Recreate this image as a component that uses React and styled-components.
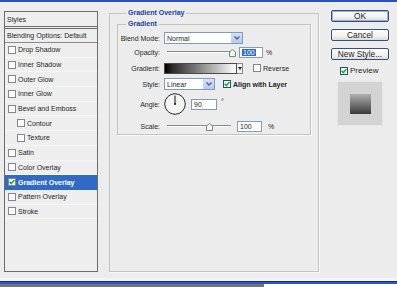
import React from 'react';
import styled, { createGlobalStyle } from 'styled-components';

const Global = createGlobalStyle`
  html, body { margin: 0; padding: 0; background: #ececec; }
  body {
    width: 397px; height: 287px; overflow: hidden;
    font-family: "Liberation Sans", Arial, sans-serif;
    font-size: 7px; color: #1e1e1e;
  }
  #root { width: 397px; height: 287px; }
`;

const Screen = styled.div`
  display: flex; flex-direction: column;
  width: 397px; height: 287px; overflow: hidden;
`;
const TopEdge = styled.div`
  flex: none; height: 2px; background: #2b4fbc;
`;
const Dialog = styled.div`
  flex: none; height: 279px; box-sizing: border-box;
  display: flex; align-items: flex-start;
  background: #ececec;
  border-bottom: 3px solid #f4f4f4;
`;
const BottomEdge = styled.div`
  flex: none; height: 3px;
  background: linear-gradient(#0d2a8a 0 1px, #2c55d0 1px);
`;
const Strip = styled.div`
  flex: none; height: 3px; display: flex;
`;
const StripPart = styled.div`
  width: ${p => p.$w}; flex: ${p => (p.$grow ? 1 : 'none')};
  background: ${p => p.$bg};
`;

/* ---------- left list ---------- */
const StylesList = styled.div`
  flex: none; margin: 9px 0 0 4px; width: 94px; height: 261px;
  box-sizing: border-box; border: 1px solid #6c6c6c;
  display: flex; flex-direction: column;
  background: #eeeeee;
`;
const ListHeader = styled.div`
  height: 17px; box-sizing: border-box; padding-left: 2px;
  display: flex; align-items: center;
  border-bottom: 3px double #6c6c6c;
`;
const BlendRow = styled.div`
  height: 14px; box-sizing: border-box; padding-left: 2px;
  display: flex; align-items: center;
  border-bottom: 1px solid #8c8c8c;
`;
const Item = styled.div`
  height: 14.7px; box-sizing: border-box;
  display: flex; align-items: center; gap: 2px;
  padding-left: ${p => (p.$indent ? 12 : 3)}px;
  border-bottom: 1px solid ${p => (p.$selected ? '#316ac5' : '#f7f7f7')};
  background: ${p => (p.$selected ? '#316ac5' : 'transparent')};
  color: ${p => (p.$selected ? '#fff' : '#1e1e1e')};
  font-weight: ${p => (p.$selected ? 700 : 400)};
`;

const Box = styled.span`
  flex: none; width: 8px; height: 8px; box-sizing: border-box;
  border: 1px solid ${p => p.$dark ? '#1c5180' : '#7d8796'};
  background: #fff;
  display: inline-flex; align-items: center; justify-content: center;
`;
const Check = ({ checked, dark }) => (
  <Box $dark={dark}>
    {checked && (
      <svg width="6" height="6" viewBox="0 0 6 6">
        <path d="M0.6 2.8 L2.3 4.6 L5.4 1.0" fill="none" stroke="#21a121" strokeWidth="1.4" />
      </svg>
    )}
  </Box>
);

/* ---------- group boxes ---------- */
const Group = styled.fieldset`
  flex: none; margin: ${p => p.$m}; padding: ${p => p.$pad};
  min-width: 0; box-sizing: border-box;
  width: ${p => p.$w}; height: ${p => p.$h};
  border: 1px solid #c3c3c3;
  box-shadow: 1px 1px 0 #fbfbfb;
`;
const Legend = styled.legend`
  margin-left: ${p => p.$ml}px; padding: 0 2px;
  line-height: 10px; height: 10px;
  font-weight: 700; color: #23409a; font-size: 7px;
`;

const Row = styled.div`
  display: flex; align-items: center;
  height: ${p => p.$h}px; margin-top: ${p => p.$mt}px;
`;
const Label = styled.span`
  flex: none; width: 43px; text-align: right; padding-right: 1px;
  box-sizing: border-box; margin-right: 3px;
`;

const SelectBox = styled.div`
  flex: none; width: ${p => p.$w}px; height: 12px; box-sizing: border-box;
  border: 1px solid #7f9db9; background: #fff;
  display: flex; align-items: stretch;
`;
const SelectText = styled.span`
  flex: 1; padding-left: 2px; display: flex; align-items: center;
`;
const SelectArrow = styled.span`
  flex: none; width: 10px;
  background: linear-gradient(#d4e0fb, #b7c9f3);
  border-left: 1px solid #c9d6f3;
  display: flex; align-items: center; justify-content: center;
`;
const Select = ({ w, value }) => (
  <SelectBox $w={w}>
    <SelectText>{value}</SelectText>
    <SelectArrow>
      <svg width="6" height="4" viewBox="0 0 6 4">
        <path d="M0.5 0.5 L3 3 L5.5 0.5" fill="none" stroke="#4d6185" strokeWidth="1.3" />
      </svg>
    </SelectArrow>
  </SelectBox>
);

const SliderWrap = styled.div`
  flex: none; position: relative; height: 12px;
  width: ${p => p.$w}px; margin-left: ${p => p.$ml}px;
  &::before {
    content: ""; position: absolute; left: 0; right: 0; top: 5px; height: 2px;
    background: linear-gradient(#8a8a8a 0 1px, #ffffff 1px);
  }
`;
const Thumb = styled.svg`
  position: absolute; top: 3px;
`;
const Slider = ({ w, ml, pos }) => (
  <SliderWrap $w={w} $ml={ml}>
    <Thumb width="7" height="8" viewBox="0 0 7 8" style={{ left: `${pos * w - 3.5}px` }}>
      <path d="M3.5 0.5 L6.5 3 L6.5 7.5 L0.5 7.5 L0.5 3 Z" fill="#fbfbfb" stroke="#5c9a5c" strokeWidth="1" />
    </Thumb>
  </SliderWrap>
);

const Input = styled.div`
  flex: none; width: ${p => p.$w}px; height: 11px; box-sizing: border-box;
  margin-left: ${p => p.$ml}px;
  border: 1px solid #7f9db9; background: #fff;
  display: flex; align-items: center; padding-left: 2px;
`;
const Selected = styled.span`
  background: #316ac5; color: #fff; padding: 0 1px;
`;
const Unit = styled.span`
  flex: none; margin-left: ${p => p.$ml}px;
  align-self: ${p => (p.$top ? 'flex-start' : 'center')};
  margin-top: ${p => (p.$top ? 5 : 0)}px;
`;

const GradientBar = styled.div`
  flex: none; width: 73px; height: 11px; box-sizing: border-box;
  border: 1px solid #4a4a4a;
  background: linear-gradient(to right, #000 0%, #2a2a2a 10%, #ffffff 100%);
`;
const SmallArrow = styled.span`
  flex: none; width: 6px; height: 11px; box-sizing: border-box;
  background: #f2f2f2; border: 1px solid #8a8a8a; border-left: none;
  display: flex; align-items: center; justify-content: center;
`;
const CheckLabel = styled.label`
  flex: none; display: flex; align-items: center; gap: 2px;
  margin-left: ${p => p.$ml}px;
  font-weight: ${p => (p.$bold ? 700 : 400)};
  font-size: ${p => p.$fs || 7}px;
`;

const Dial = styled.svg`
  flex: none; display: block;
`;

/* ---------- right column ---------- */
const RightCol = styled.div`
  flex: none; margin: 8px 0 0 12px; width: 58px;
  display: flex; flex-direction: column; gap: 7px;
`;
const Button = styled.button`
  width: 58px; height: 12px; padding: 0; margin: 0;
  font-family: "Liberation Sans", Arial, sans-serif; font-size: 8.3px; color: #1e1e1e;
  border: 1px solid #36507e; border-radius: 2px;
  background: linear-gradient(#ffffff, #f2f2ef 60%, #dcdcd6);
  box-shadow: ${p => (p.$default ? 'inset 0 0 0 1px #8fb1e6' : 'none')};
  line-height: 10px;
`;
const PreviewRow = styled.div`
  margin: -1px 0 0 9px;
`;
const Swatch = styled.div`
  width: 46px; height: 45px; margin: -1px 0 0 6px; box-sizing: border-box;
  background: #d3d3d3; border: 1px solid #e7e7e7;
  display: flex; align-items: center; justify-content: center;
`;
const SwatchInner = styled.div`
  width: 21px; height: 20px;
  background: linear-gradient(#b0b0b0, #3a3a3a);
`;

const items = [
  { t: 'Drop Shadow' },
  { t: 'Inner Shadow' },
  { t: 'Outer Glow' },
  { t: 'Inner Glow' },
  { t: 'Bevel and Emboss' },
  { t: 'Contour', indent: true },
  { t: 'Texture', indent: true },
  { t: 'Satin' },
  { t: 'Color Overlay' },
  { t: 'Gradient Overlay', checked: true, selected: true },
  { t: 'Pattern Overlay' },
  { t: 'Stroke' },
];

export default function App() {
  return (
    <>
      <Global />
      <Screen>
        <TopEdge />
        <Dialog>
          <StylesList>
            <ListHeader>Styles</ListHeader>
            <BlendRow>Blending Options: Default</BlendRow>
            {items.map(it => (
              <Item key={it.t} $indent={it.indent} $selected={it.selected}>
                <Check checked={it.checked} />
                <span>{it.t}</span>
              </Item>
            ))}
          </StylesList>

          <Group $m="6px 0 0 11px" $pad="0 7px" $w="210px" $h="264px">
            <Legend $ml={9}>Gradient Overlay</Legend>
            <Group $m="1px 0 0 0" $pad="3px 0 0 0" $w="194px" $h="116px">
              <Legend $ml={8}>Gradient</Legend>
              <Row $h={12} $mt={0}>
                <Label>Blend Mode:</Label>
                <Select w={79} value="Normal" />
              </Row>
              <Row $h={12} $mt={2}>
                <Label>Opacity:</Label>
                <Slider w={66} ml={3} pos={0.99} />
                <Input $w={24} $ml={6}><Selected>100</Selected></Input>
                <Unit $ml={3}>%</Unit>
              </Row>
              <Row $h={12} $mt={4}>
                <Label>Gradient:</Label>
                <GradientBar />
                <SmallArrow>
                  <svg width="4" height="3" viewBox="0 0 4 3"><path d="M0 0 H4 L2 3 Z" fill="#222" /></svg>
                </SmallArrow>
                <CheckLabel $ml={10}><Check />Reverse</CheckLabel>
              </Row>
              <Row $h={12} $mt={4}>
                <Label>Style:</Label>
                <Select w={51} value="Linear" />
                <CheckLabel $ml={8} $bold><Check checked dark />Align with Layer</CheckLabel>
              </Row>
              <Row $h={22} $mt={3}>
                <Label>Angle:</Label>
                <Dial width="22" height="22" viewBox="0 0 22 22">
                  <circle cx="11" cy="11" r="10.3" fill="#f4f4f4" stroke="#2a2a2a" strokeWidth="1" />
                  <line x1="11" y1="11" x2="11" y2="2.5" stroke="#111" strokeWidth="1" />
                  <circle cx="11" cy="11" r="1" fill="#111" />
                </Dial>
                <Input $w={26} $ml={5}>90</Input>
                <Unit $ml={4} $top>°</Unit>
              </Row>
              <Row $h={12} $mt={5}>
                <Label>Scale:</Label>
                <Slider w={64} ml={3} pos={0.66} />
                <Input $w={25} $ml={6}>100</Input>
                <Unit $ml={6}>%</Unit>
              </Row>
            </Group>
          </Group>

          <RightCol>
            <Button $default>OK</Button>
            <Button>Cancel</Button>
            <Button>New Style...</Button>
            <PreviewRow>
              <CheckLabel $ml={0} $fs={8}><Check checked dark />Preview</CheckLabel>
            </PreviewRow>
            <Swatch><SwatchInner /></Swatch>
          </RightCol>
        </Dialog>
        <BottomEdge />
        <Strip>
          <StripPart $w="264px" $bg="#757575" />
          <StripPart $grow $bg="#ffffff" />
        </Strip>
      </Screen>
    </>
  );
}
